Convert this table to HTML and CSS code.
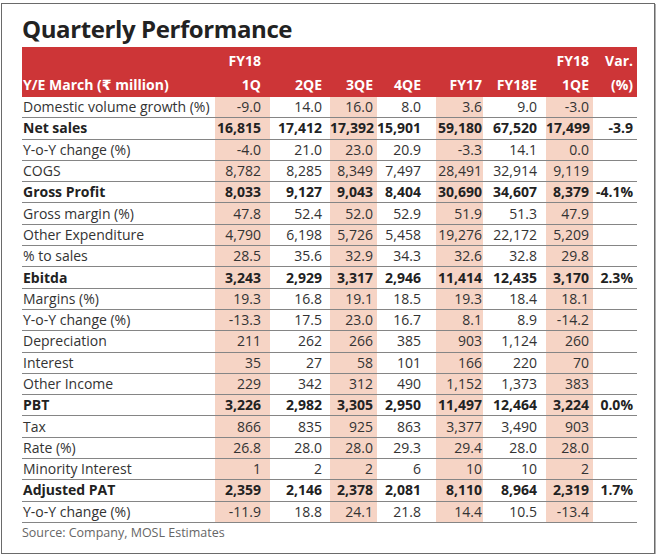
FILE: index.html
```html
<!DOCTYPE html>
<html>
<head>
<meta charset="utf-8">
<link rel="stylesheet" href="styles.css">
</head>
<body>
<div class="frame">
  <h1 class="title">Quarterly Performance</h1>
  <table class="perf">
    <colgroup>
      <col class="c-label"><col class="c-1q"><col class="c-2q"><col class="c-3q"><col class="c-4q"><col class="c-fy17"><col class="c-fy18"><col class="c-1qe"><col class="c-var">
    </colgroup>
    <thead>
      <tr><th class="lab"></th><th>FY18</th><th></th><th></th><th></th><th></th><th></th><th>FY18</th><th>Var.</th></tr>
      <tr><th class="lab">Y/E March (₹ million)</th><th>1Q</th><th>2QE</th><th>3QE</th><th>4QE</th><th>FY17</th><th>FY18E</th><th>1QE</th><th>(%)</th></tr>
    </thead>
    <tbody>
      <tr><td>Domestic volume growth (%)</td><td>-9.0</td><td>14.0</td><td>16.0</td><td>8.0</td><td>3.6</td><td>9.0</td><td>-3.0</td><td></td></tr>
      <tr class="b"><td>Net sales</td><td>16,815</td><td>17,412</td><td>17,392</td><td>15,901</td><td>59,180</td><td>67,520</td><td>17,499</td><td>-3.9</td></tr>
      <tr><td>Y-o-Y change (%)</td><td>-4.0</td><td>21.0</td><td>23.0</td><td>20.9</td><td>-3.3</td><td>14.1</td><td>0.0</td><td></td></tr>
      <tr><td>COGS</td><td>8,782</td><td>8,285</td><td>8,349</td><td>7,497</td><td>28,491</td><td>32,914</td><td>9,119</td><td></td></tr>
      <tr class="b"><td>Gross Profit</td><td>8,033</td><td>9,127</td><td>9,043</td><td>8,404</td><td>30,690</td><td>34,607</td><td>8,379</td><td>-4.1%</td></tr>
      <tr><td>Gross margin (%)</td><td>47.8</td><td>52.4</td><td>52.0</td><td>52.9</td><td>51.9</td><td>51.3</td><td>47.9</td><td></td></tr>
      <tr><td>Other Expenditure</td><td>4,790</td><td>6,198</td><td>5,726</td><td>5,458</td><td>19,276</td><td>22,172</td><td>5,209</td><td></td></tr>
      <tr><td>% to sales</td><td>28.5</td><td>35.6</td><td>32.9</td><td>34.3</td><td>32.6</td><td>32.8</td><td>29.8</td><td></td></tr>
      <tr class="b"><td>Ebitda</td><td>3,243</td><td>2,929</td><td>3,317</td><td>2,946</td><td>11,414</td><td>12,435</td><td>3,170</td><td>2.3%</td></tr>
      <tr><td>Margins (%)</td><td>19.3</td><td>16.8</td><td>19.1</td><td>18.5</td><td>19.3</td><td>18.4</td><td>18.1</td><td></td></tr>
      <tr><td>Y-o-Y change (%)</td><td>-13.3</td><td>17.5</td><td>23.0</td><td>16.7</td><td>8.1</td><td>8.9</td><td>-14.2</td><td></td></tr>
      <tr><td>Depreciation</td><td>211</td><td>262</td><td>266</td><td>385</td><td>903</td><td>1,124</td><td>260</td><td></td></tr>
      <tr><td>Interest</td><td>35</td><td>27</td><td>58</td><td>101</td><td>166</td><td>220</td><td>70</td><td></td></tr>
      <tr><td>Other Income</td><td>229</td><td>342</td><td>312</td><td>490</td><td>1,152</td><td>1,373</td><td>383</td><td></td></tr>
      <tr class="b"><td>PBT</td><td>3,226</td><td>2,982</td><td>3,305</td><td>2,950</td><td>11,497</td><td>12,464</td><td>3,224</td><td>0.0%</td></tr>
      <tr><td>Tax</td><td>866</td><td>835</td><td>925</td><td>863</td><td>3,377</td><td>3,490</td><td>903</td><td></td></tr>
      <tr><td>Rate (%)</td><td>26.8</td><td>28.0</td><td>28.0</td><td>29.3</td><td>29.4</td><td>28.0</td><td>28.0</td><td></td></tr>
      <tr><td>Minority Interest</td><td>1</td><td>2</td><td>2</td><td>6</td><td>10</td><td>10</td><td>2</td><td></td></tr>
      <tr class="b"><td>Adjusted PAT</td><td>2,359</td><td>2,146</td><td>2,378</td><td>2,081</td><td>8,110</td><td>8,964</td><td>2,319</td><td>1.7%</td></tr>
      <tr><td>Y-o-Y change (%)</td><td>-11.9</td><td>18.8</td><td>24.1</td><td>21.8</td><td>14.4</td><td>10.5</td><td>-13.4</td><td></td></tr>
    </tbody>
  </table>
  <p class="source">Source: Company, MOSL Estimates</p>
</div>
</body>
</html>
```
FILE: styles.css
```css
html, body {
  margin: 0;
  padding: 0;
  background: #fff;
}
body {
  font-family: "Open Sans", "DejaVu Sans", sans-serif;
  color: #333;
}
.frame {
  box-sizing: border-box;
  width: 654px;
  height: 551px;
  margin: 3px 0 0 1px;
  border: 1px solid #6a6a6a;
  box-shadow: 1px 1px 0 #b0b0b0;
  padding: 0 0 0 20px;
}
.title {
  margin: 0;
  height: 43px;
  padding-top: 10px;
  box-sizing: border-box;
  font-size: 24px;
  line-height: 30px;
  font-weight: 700;
  color: #222;
  letter-spacing: -0.4px;
}
.perf {
  border-collapse: collapse;
  table-layout: fixed;
  width: 615px;
  font-size: 14px;
}
.c-label { width: 193px; }
.c-1q { width: 55px; }
.c-2q { width: 60px; }
.c-3q { width: 47px; }
.c-4q { width: 59px; }
.c-fy17 { width: 47px; }
.c-fy18 { width: 63px; }
.c-1qe { width: 47px; }
.c-var { width: 44px; }
.perf thead tr {
  background: #cd3537;
  color: #fff;
}
.perf th {
  height: 24px;
  padding: 0;
  font-weight: 700;
  text-align: right;
  line-height: 24px;
  white-space: nowrap;
}
.perf thead tr:first-child th { padding-top: 2px; }
.perf th.lab { text-align: left; padding-left: 1px; }
.perf td {
  height: 20.3px;
  padding: 0;
  line-height: 20px;
  text-align: right;
  white-space: nowrap;
  border-bottom: 1px solid #858585;
}
.perf td:first-child { text-align: left; padding-left: 1px; }
.perf td:nth-child(2),
.perf td:nth-child(4),
.perf td:nth-child(6),
.perf td:nth-child(8) { background: #f6d4c5; }
.perf td:nth-child(2), .perf th:nth-child(2) { padding-right: 9px; }
.perf td:nth-child(3), .perf th:nth-child(3) { padding-right: 8px; }
.perf td:nth-child(4), .perf th:nth-child(4) { padding-right: 4px; }
.perf td:nth-child(5), .perf th:nth-child(5) { padding-right: 15px; }
.perf td:nth-child(6), .perf th:nth-child(6) { padding-right: 1px; }
.perf td:nth-child(7), .perf th:nth-child(7) { padding-right: 9px; }
.perf td:nth-child(8), .perf th:nth-child(8) { padding-right: 4px; }
.perf td:nth-child(9), .perf th:nth-child(9) { padding-right: 4px; }
.perf tr.b td { font-weight: 700; color: #222; }
.source {
  margin: 0;
  padding-top: 2px;
  font-size: 12.5px;
  line-height: 16px;
  color: #666;
}
```
